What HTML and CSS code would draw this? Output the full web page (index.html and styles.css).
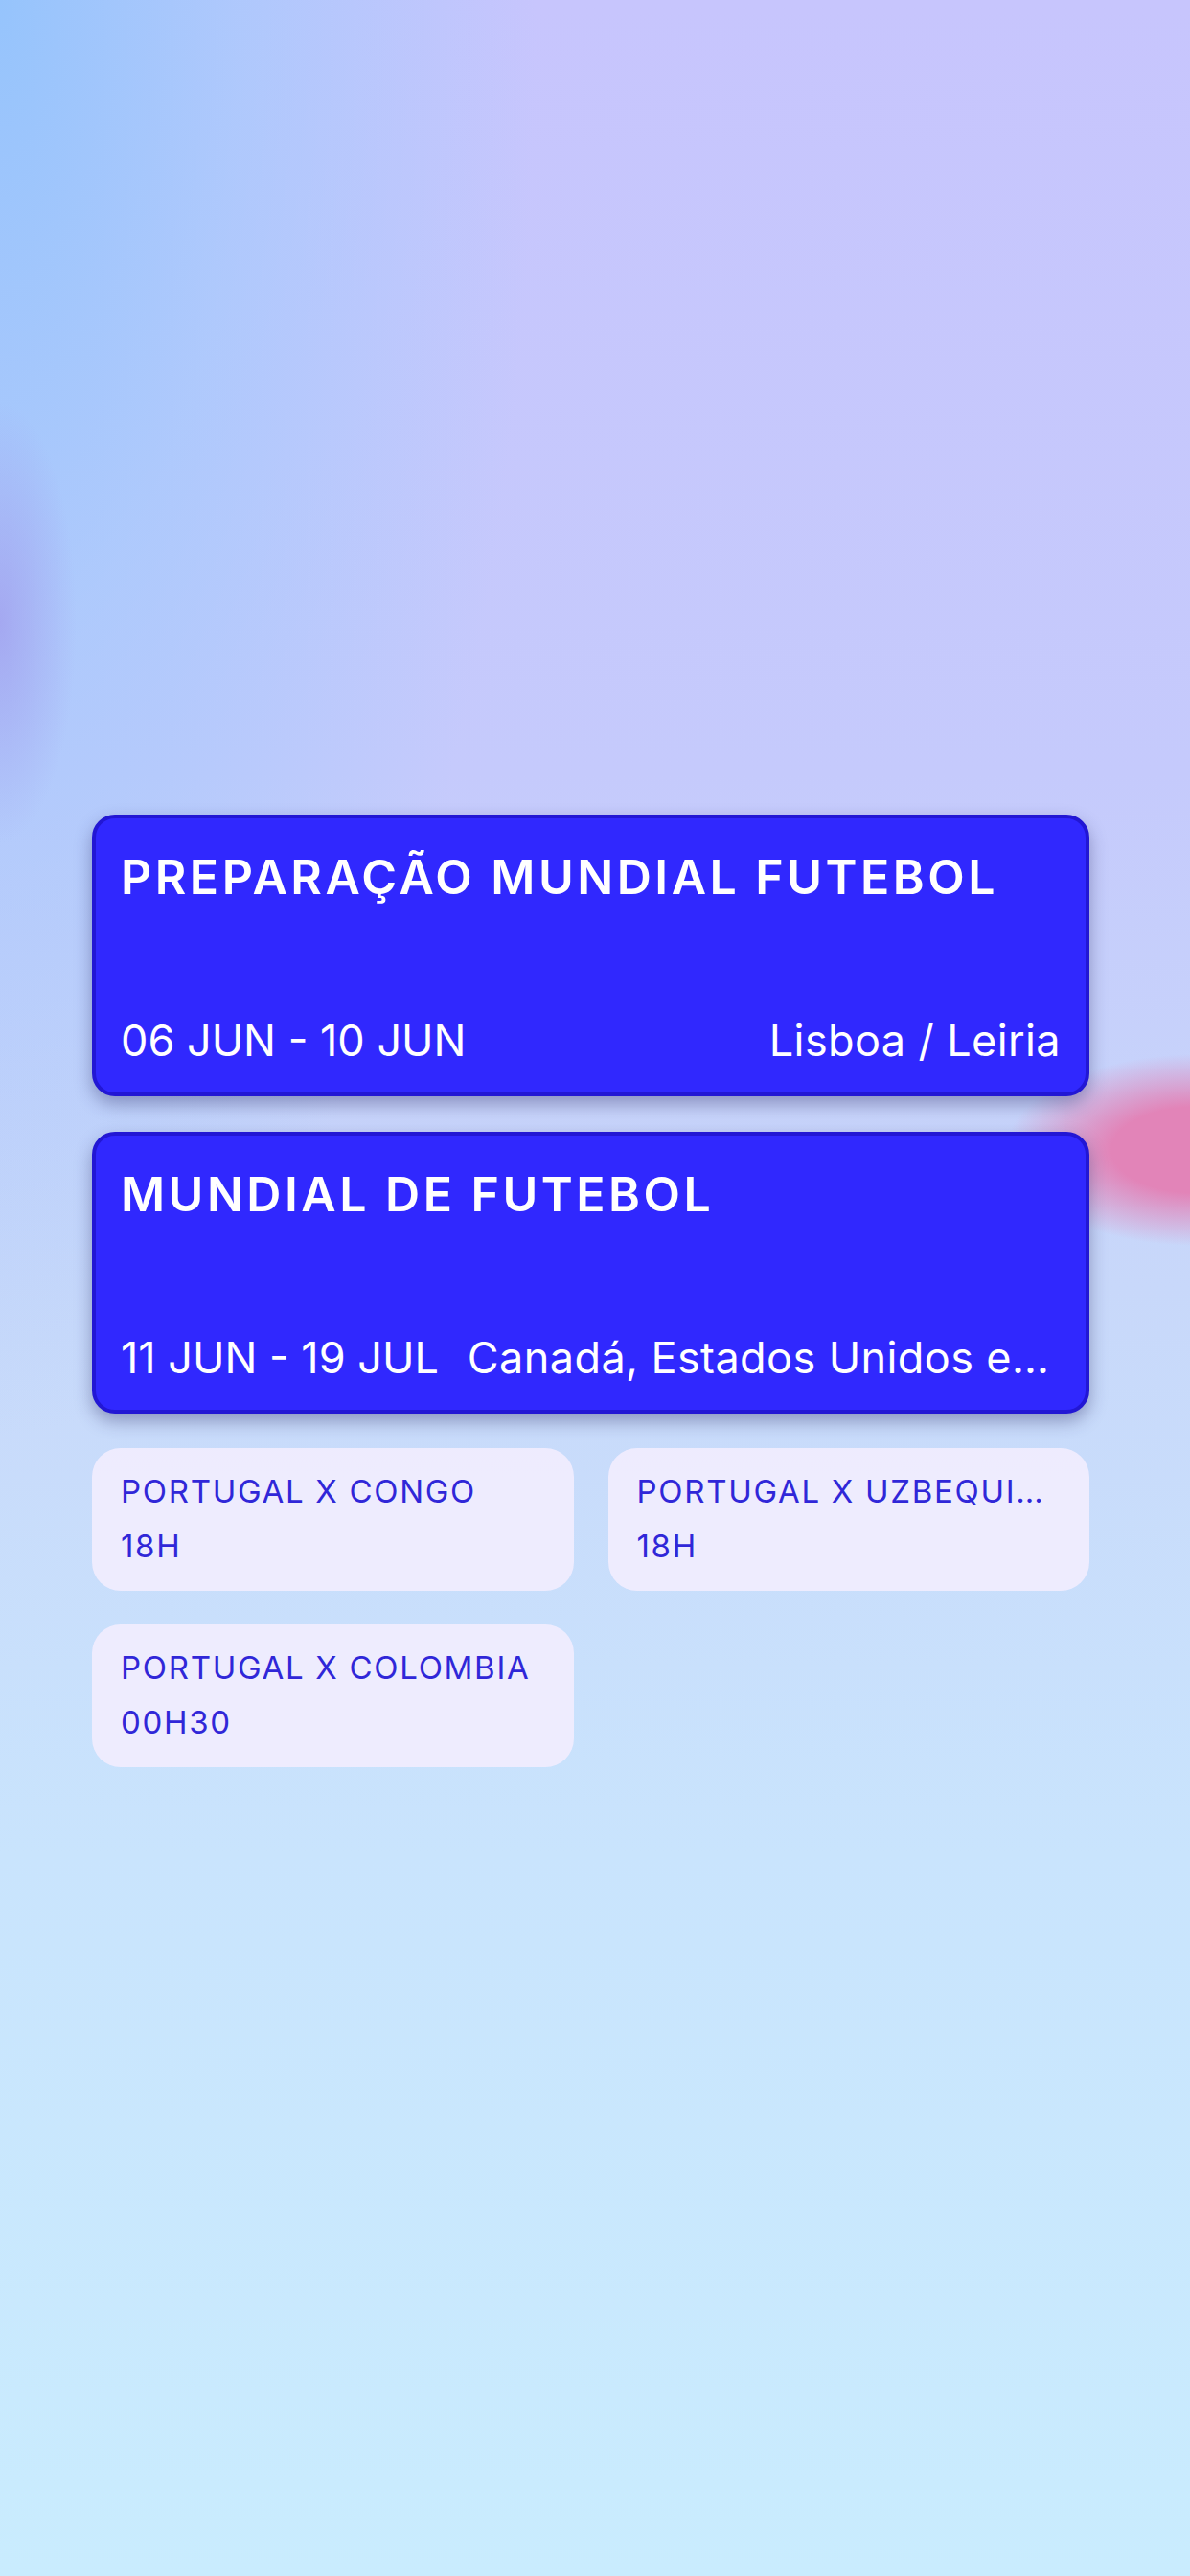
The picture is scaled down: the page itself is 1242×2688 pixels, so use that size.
FILE: index.html
```html
<!DOCTYPE html>
<html lang="pt">
<head>
    <meta charset="UTF-8" />
    <title>Mundial de Futebol</title>
    <link rel="stylesheet" href="styles.css">
</head>
<body>
    <div class="events">
        <div class="event-card">
            <h2 class="event-title">PREPARAÇÃO MUNDIAL FUTEBOL</h2>
            <div class="event-meta">
                <span class="event-date">06 JUN - 10 JUN</span>
                <span class="event-place">Lisboa / Leiria</span>
            </div>
        </div>

        <div class="event-card">
            <h2 class="event-title">MUNDIAL DE FUTEBOL</h2>
            <div class="event-meta">
                <span class="event-date">11 JUN - 19 JUL</span>
                <span class="event-place">Canadá, Estados Unidos e México</span>
            </div>
        </div>

        <div class="match-grid">
            <div class="match-card">
                <p class="match-name">PORTUGAL X CONGO</p>
                <p class="match-time">18H</p>
            </div>
            <div class="match-card">
                <p class="match-name">PORTUGAL X UZBEQUISTÃO</p>
                <p class="match-time">18H</p>
            </div>
            <div class="match-card">
                <p class="match-name">PORTUGAL X COLOMBIA</p>
                <p class="match-time">00H30</p>
            </div>
        </div>
    </div>
</body>
</html>
```

FILE: styles.css
```css
html, body {
    margin: 0;
    padding: 0;
}

body {
    font-family: Inter, "Liberation Sans", sans-serif;
    width: 1242px;
    height: 2688px;
    overflow: hidden;
    background:
        radial-gradient(ellipse 200px 100px at 1250px 1200px, rgba(226, 132, 184, 1) 45%, rgba(226, 132, 184, 0) 100%),
        radial-gradient(ellipse 80px 230px at 0 650px, rgba(162, 160, 238, 0.8) 0%, rgba(162, 160, 238, 0) 100%),
        radial-gradient(ellipse 560px 1500px at 0 0, rgba(150, 196, 252, 1) 0%, rgba(162, 202, 252, 0.65) 45%, rgba(170, 205, 252, 0) 100%),
        linear-gradient(180deg, #c7c5fd 0%, #c5cafc 30%, #c8d8fa 50%, #c9e4fd 72%, #c9ecfe 100%);
}

.events {
    width: 1041px;
    padding: 850px 0 0 96px;
    display: flex;
    flex-direction: column;
    gap: 37px;
}

.event-card {
    box-sizing: border-box;
    height: 294px;
    background: #3028fe;
    border: 4px solid #2217d4;
    border-radius: 24px;
    box-shadow: 0 8px 18px rgba(40, 40, 100, 0.38);
    padding: 31px 26px 27px 26px;
    display: flex;
    flex-direction: column;
    justify-content: space-between;
    color: white;
}

.event-title {
    margin: 0;
    font-size: 50px;
    line-height: 60px;
    font-weight: 600;
    letter-spacing: 3.5px;
}

.event-meta {
    display: flex;
    gap: 30px;
    font-size: 45px;
    line-height: 54px;
    font-weight: 400;
}

.event-date {
    flex-shrink: 0;
}

.event-place {
    flex: 1;
    min-width: 0;
    text-align: right;
    white-space: nowrap;
    overflow: hidden;
    text-overflow: ellipsis;
    letter-spacing: 0.4px;
}

.match-grid {
    display: grid;
    grid-template-columns: 1fr 1fr;
    column-gap: 36px;
    row-gap: 35px;
    margin-top: -1px;
}

.match-card {
    background: rgba(240, 236, 254, 0.95);
    border-radius: 30px;
    padding: 17px 30px 18px 30px;
    color: #3027d8;
    min-width: 0;
}

.match-card p {
    margin: 0;
    font-size: 33px;
    line-height: 57px;
    letter-spacing: 1.7px;
    white-space: nowrap;
    overflow: hidden;
    text-overflow: ellipsis;
}
```
